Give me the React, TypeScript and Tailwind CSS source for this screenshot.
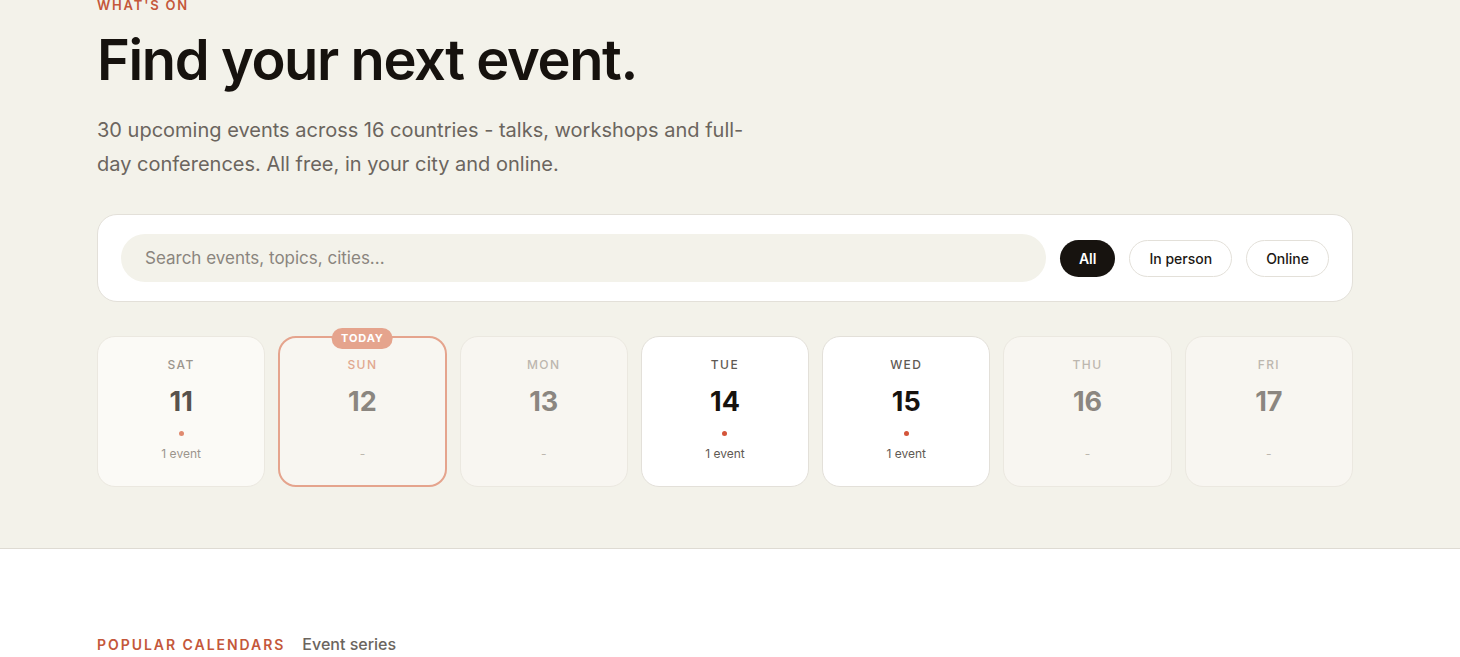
import { useState } from "react";

type Day = {
  name: string;
  date: number;
  events: number;
  kind: "past" | "today" | "future";
};

const days: Day[] = [
  { name: "Sat", date: 11, events: 1, kind: "past" },
  { name: "Sun", date: 12, events: 0, kind: "today" },
  { name: "Mon", date: 13, events: 0, kind: "future" },
  { name: "Tue", date: 14, events: 1, kind: "future" },
  { name: "Wed", date: 15, events: 1, kind: "future" },
  { name: "Thu", date: 16, events: 0, kind: "future" },
  { name: "Fri", date: 17, events: 0, kind: "future" },
];

function DayCard({ day }: { day: Day }) {
  const hasEvents = day.events > 0;

  // card look depends on past/today/has events
  let card = "bg-[#f8f6f1] border border-[#ebe8e0]";
  let label = "text-[#bdb7af]";
  let num = "text-[#8b8680]";
  let sub = "text-[#bdb7af]";
  if (day.kind === "today") {
    card = "bg-[#f8f6f1] border-2 border-[#e5a48d]";
    label = "text-[#e1a88f]";
  } else if (day.kind === "past") {
    card = "bg-[#fbfaf6] border border-[#ebe8e0]";
    label = "text-[#9b958d]";
    num = "text-[#57524c]";
    sub = "text-[#9b958d]";
  } else if (hasEvents) {
    card = "bg-white border border-[#e3e0d9]";
    label = "text-[#5f5a54]";
    num = "text-[#16120e]";
    sub = "text-[#5f5a54]";
  }

  return (
    <div
      className={`relative h-[151px] rounded-[18px] flex flex-col items-center pt-[20px] ${card}`}
    >
      {day.kind === "today" && (
        <span className="absolute -top-[10px] left-1/2 -translate-x-1/2 rounded-full bg-[#e5a48d] px-[9px] h-[21px] flex items-center text-[11px] font-bold tracking-[0.08em] text-white">
          TODAY
        </span>
      )}
      <div
        className={`text-[12px] font-medium uppercase tracking-[0.12em] leading-4 ${label} ${
          day.kind === "today" ? "-mt-px" : ""
        }`}
      >
        {day.name}
      </div>
      <div className={`mt-[14px] text-[27px] font-bold leading-[30px] ${num}`}>
        {day.date}
      </div>
      <div className="h-[5px] mt-[14px]">
        {hasEvents && (
          <div
            className={`w-[5px] h-[5px] rounded-full ${
              day.kind === "past" ? "bg-[#e08a6f]" : "bg-[#d4553a]"
            }`}
          />
        )}
      </div>
      <div className={`mt-[10px] text-[12px] leading-4 ${sub}`}>
        {hasEvents ? `${day.events} event` : "-"}
      </div>
    </div>
  );
}

export default function App() {
  const [filter, setFilter] = useState<"all" | "in-person" | "online">("all");
  const [query, setQuery] = useState("");

  const pill = (active: boolean) =>
    `h-[37px] rounded-full text-[14px] font-medium px-[19px] ${
      active
        ? "bg-[#17130f] text-white font-semibold"
        : "bg-white border border-[#e3e0d9] text-[#1c1814]"
    }`;

  return (
    <div
      className="min-h-screen bg-white overflow-hidden"
      style={{ fontFamily: "Inter, 'Noto Sans', sans-serif" }}
    >
      {/* Hero */}
      <section className="bg-[#f3f2ea] border-b border-[#dedbd3]">
        <div className="px-[97px] pb-[61px]">
          <p className="-mt-[3px] text-[13px] font-semibold tracking-[0.14em] text-[#c4573a] leading-4">
            WHAT'S ON
          </p>
          <h1 className="mt-[15px] text-[56px] font-semibold tracking-[-0.025em] leading-[64px] text-[#16120e]">
            Find your next event.
          </h1>
          <p className="mt-[21px] w-[670px] text-[20px] leading-[34px] text-[#6b655e]">
            30 upcoming events across 16 countries - talks, workshops and
            full-day conferences. All free, in your city and online.
          </p>

          {/* Search */}
          <div className="mt-[33px] w-[1256px] rounded-[20px] bg-white border border-[#e3e0d9] px-[23px] py-[19px] flex items-center gap-[14px]">
            <input
              value={query}
              onChange={(e) => setQuery(e.target.value)}
              placeholder="Search events, topics, cities..."
              className="flex-1 h-[48px] rounded-full bg-[#f3f2ea] px-[24px] text-[17px] text-[#1c1814] placeholder:text-[#8a857e] outline-none"
            />
            <button onClick={() => setFilter("all")} className={pill(filter === "all")}>
              All
            </button>
            <button
              onClick={() => setFilter("in-person")}
              className={pill(filter === "in-person")}
            >
              In person
            </button>
            <button onClick={() => setFilter("online")} className={pill(filter === "online")}>
              Online
            </button>
          </div>

          {/* Week strip */}
          <div className="mt-[34px] w-[1256px] grid grid-cols-7 gap-[13px]">
            {days.map((d) => (
              <DayCard key={d.date} day={d} />
            ))}
          </div>
        </div>
      </section>

      {/* Popular calendars */}
      <section className="px-[97px] pt-[83px]">
        <div className="flex items-baseline gap-[17px]">
          <span className="text-[14px] font-semibold tracking-[0.14em] text-[#c4573a]">
            POPULAR CALENDARS
          </span>
          <span className="text-[16px] font-medium text-[#6b655e]">Event series</span>
        </div>
      </section>
    </div>
  );
}
